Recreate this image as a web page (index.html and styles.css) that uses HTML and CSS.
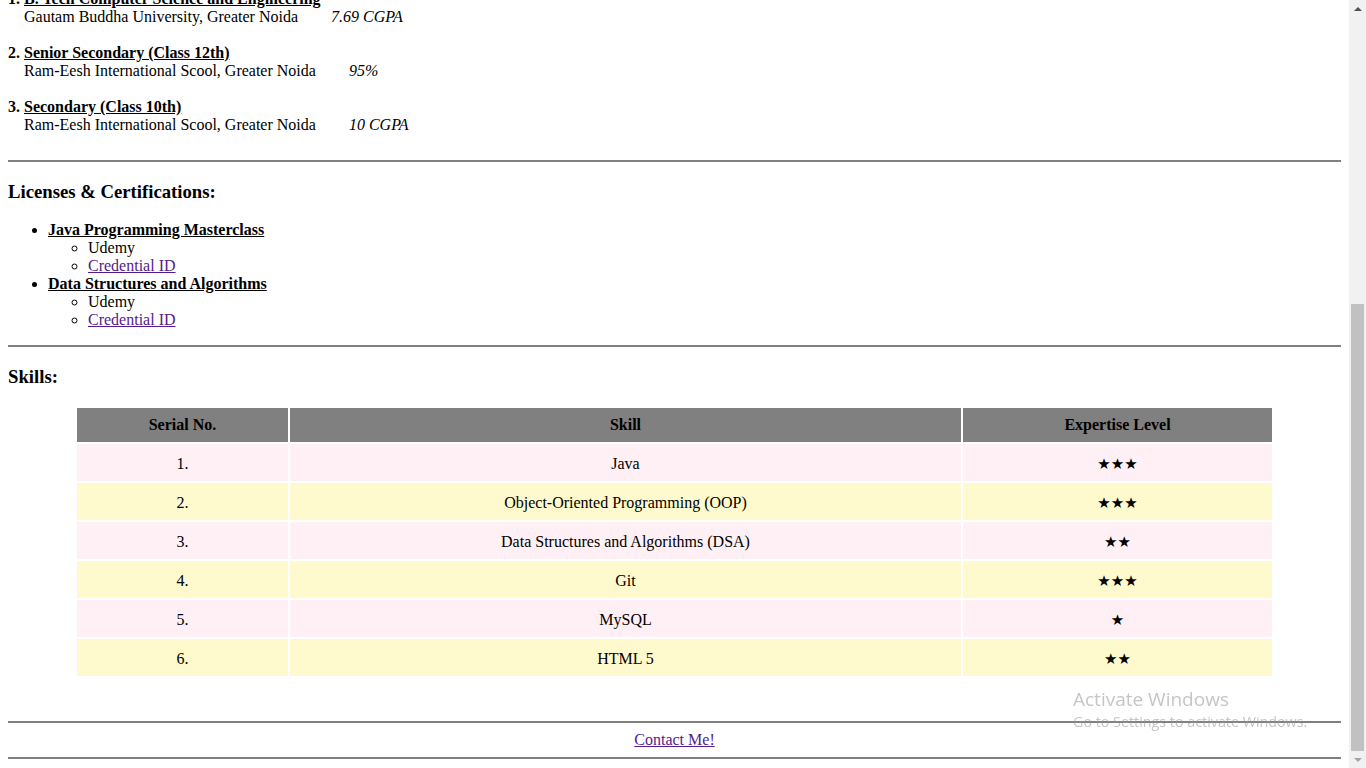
FILE: index.html
```html
<!DOCTYPE html>
<html lang="en">
<head>
<meta charset="utf-8">
<title>Resume</title>
<link rel="stylesheet" href="styles.css">
</head>
<body>
<div class="viewport">
  <main class="page">
    <section class="education">
      <div class="entry">
        <b>1. <u>B. Tech Computer Science and Engineering</u></b><br>
        <span class="inst">Gautam Buddha University, Greater Noida</span><i class="score">7.69 CGPA</i>
      </div>
      <div class="entry">
        <b>2. <u>Senior Secondary (Class 12th)</u></b><br>
        <span class="inst">Ram-Eesh International Scool, Greater Noida</span><i class="score">95%</i>
      </div>
      <div class="entry">
        <b>3. <u>Secondary (Class 10th)</u></b><br>
        <span class="inst">Ram-Eesh International Scool, Greater Noida</span><i class="score">10 CGPA</i>
      </div>
    </section>
    <hr class="rule">
    <h3 class="heading">Licenses &amp; Certifications:</h3>
    <ul class="certs">
      <li><b><u>Java Programming Masterclass</u></b>
        <ul class="sub">
          <li>Udemy</li>
          <li><a class="link" href="#">Credential ID</a></li>
        </ul>
      </li>
      <li><b><u>Data Structures and Algorithms</u></b>
        <ul class="sub">
          <li>Udemy</li>
          <li><a class="link" href="#">Credential ID</a></li>
        </ul>
      </li>
    </ul>
    <hr class="rule">
    <h3 class="heading">Skills:</h3>
    <table class="skills">
      <thead>
        <tr>
          <th class="c1">Serial No.</th>
          <th class="c2">Skill</th>
          <th class="c3">Expertise Level</th>
        </tr>
      </thead>
      <tbody>
        <tr class="pink"><td>1.</td><td>Java</td><td><span class="stars">★★★</span></td></tr>
        <tr class="yellow"><td>2.</td><td>Object-Oriented Programming (OOP)</td><td><span class="stars">★★★</span></td></tr>
        <tr class="pink"><td>3.</td><td>Data Structures and Algorithms (DSA)</td><td><span class="stars">★★</span></td></tr>
        <tr class="yellow"><td>4.</td><td>Git</td><td><span class="stars">★★★</span></td></tr>
        <tr class="pink"><td>5.</td><td>MySQL</td><td><span class="stars">★</span></td></tr>
        <tr class="yellow"><td>6.</td><td>HTML 5</td><td><span class="stars">★★</span></td></tr>
      </tbody>
    </table>
    <div class="spacer"></div>
    <hr class="rule">
    <div class="contact"><a class="link" href="#">Contact Me!</a></div>
    <hr class="rule">
  </main>
  <div class="scrollbar">
    <div class="arrow up"></div>
    <div class="track"><div class="thumb"></div></div>
    <div class="arrow down"></div>
  </div>
</div>
<div class="watermark">
  <div class="wm-title">Activate Windows</div>
  <div class="wm-sub">Go to Settings to activate Windows.</div>
</div>
</body>
</html>
```
FILE: styles.css
```css
html, body {
  margin: 0;
  padding: 0;
  height: 768px;
  overflow: hidden;
  background: #fff;
}

body {
  font-family: "Liberation Serif", "Times New Roman", serif;
  font-size: 16px;
  line-height: 18px;
  color: #000;
}

.viewport {
  display: flex;
  height: 768px;
}

.page {
  flex: 1;
  min-width: 0;
  padding: 0 8px;
  margin-top: -10px;
}

.entry {
  padding-bottom: 18px;
}

.inst {
  padding-left: 16px;
}

.score {
  margin-left: 33px;
}

.rule {
  border: 0;
  border-top: 2px solid #808080;
  height: 0;
  margin: 8px 0;
}

.heading {
  font-size: 18.72px;
  line-height: 21.5px;
  margin: 18.72px 0;
  font-weight: bold;
}

.certs {
  margin: 16px 0;
  padding-left: 40px;
  list-style: disc;
}

.sub {
  margin: 0;
  padding-left: 40px;
  list-style: circle;
}

.link {
  color: #551a8b;
  text-decoration: underline;
}

.skills {
  width: 1199px;
  margin: 0 auto;
  table-layout: fixed;
  border-collapse: separate;
  border-spacing: 2px;
}

.skills th {
  background: #808080;
  padding: 8px;
  font-weight: bold;
  text-align: center;
}

.skills .c1 { width: 195px; }
.skills .c2 { width: 655px; }
.skills .c3 { width: 293px; }

.skills td {
  padding: 11px 8px 8px;
  text-align: center;
}

.pink td { background: #fff0f5; }
.yellow td { background: #fffacd; }

.stars {
  font-family: "DejaVu Sans", sans-serif;
  font-size: 15px;
}

.spacer {
  height: 35px;
}

.contact {
  text-align: center;
}

.scrollbar {
  width: 17px;
  flex: none;
  background: #f1f1f1;
  display: flex;
  flex-direction: column;
}

.arrow {
  height: 17px;
  flex: none;
  display: flex;
  align-items: center;
  justify-content: center;
}

.arrow::before {
  content: "";
  width: 0;
  height: 0;
  border-left: 4px solid transparent;
  border-right: 4px solid transparent;
}

.arrow.up::before {
  border-bottom: 4px solid #505050;
}

.arrow.down::before {
  border-top: 4px solid #a3a3a3;
}

.track {
  flex: 1;
  display: flex;
  flex-direction: column;
  justify-content: flex-end;
}

.thumb {
  height: 447px;
  margin: 0 2px;
  background: #c1c1c1;
}

.watermark {
  position: fixed;
  left: 1073px;
  top: 686px;
  font-family: "Open Sans", "Noto Sans", sans-serif;
  color: rgba(150, 150, 150, 0.55);
  pointer-events: none;
}

.wm-title {
  font-size: 19px;
  line-height: 26px;
}

.wm-sub {
  font-size: 14.3px;
  line-height: 19px;
}
```
